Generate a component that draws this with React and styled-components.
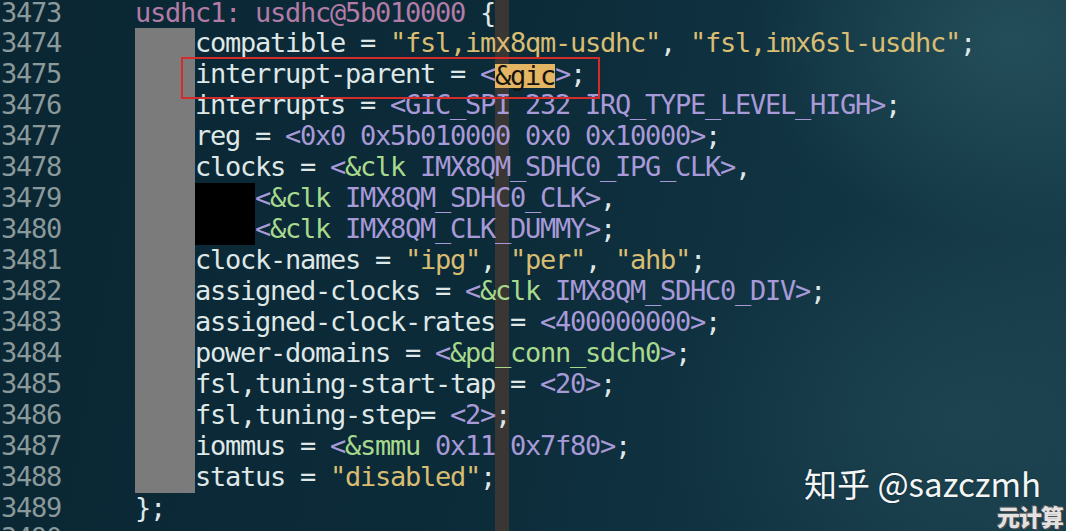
import React from 'react';
import styled, { createGlobalStyle } from 'styled-components';

const Global = createGlobalStyle`
  html, body {
    margin: 0;
    padding: 0;
    background: #0c2a37;
    overflow: hidden;
  }
`;

const colors = {
  fg: '#dfe7e7',
  num: '#8a9a9a',
  node: '#b27ca6',
  str: '#d8bd72',
  lav: '#a89ad8',
  green: '#a8d98c',
};

const Screen = styled.div`
  position: relative;
  width: 1066px;
  height: 531px;
  overflow: hidden;
  background:
    radial-gradient(ellipse 260px 200px at 1010px 40px, rgba(48, 96, 104, 0.55), transparent),
    radial-gradient(ellipse 300px 220px at 960px 420px, rgba(40, 80, 92, 0.45), transparent),
    linear-gradient(100deg, #0a2633 0%, #0c2b39 45%, #113443 75%, #173c4a 100%);
`;

const ColorColumn = styled.div`
  position: absolute;
  top: 0;
  bottom: 0;
  left: 495px;
  width: 14px;
  background: #3a3633;
  z-index: 0;
`;

const Lines = styled.div`
  position: relative;
  z-index: 1;
  display: flex;
  flex-direction: column;
  margin-top: -2.5px;
  font-family: "DejaVu Sans Mono", "Liberation Mono", monospace;
  font-size: 27px;
  letter-spacing: -1.255px;
  white-space: pre;
`;

const Row = styled.div`
  display: grid;
  grid-template-columns: 135px 1fr;
  height: 30.94px;
  line-height: 30.94px;
  align-items: stretch;
`;

const Num = styled.span`
  color: ${colors.num};
  padding-left: 1px;
`;

const Code = styled.div`
  display: flex;
  align-items: stretch;
`;

const Tab = styled.span`
  display: block;
  width: 60px;
  flex: none;
  background: ${(p) => (p.$tone === 'black' ? '#000' : '#7b7b7b')};
`;

const Text = styled.span`
  color: ${(p) => colors[p.$c || 'fg']};
`;

const Mark = styled.span`
  display: inline-block;
  height: 24px;
  line-height: 24px;
  vertical-align: middle;
  background: #e4b562;
  color: #15140f;
`;

const RedBox = styled.div`
  position: absolute;
  left: 181px;
  top: 57px;
  width: 415px;
  height: 38px;
  border: 2px solid #d42b2b;
  z-index: 2;
`;

const Watermark = styled.div`
  position: absolute;
  left: 804px;
  top: 467px;
  z-index: 3;
  font-family: "Noto Sans CJK SC", "Noto Sans", sans-serif;
  font-size: 33px;
  line-height: 33px;
  color: #f4f6f6;
  text-shadow: 0 0 2px rgba(0, 0, 0, 0.4);
  white-space: nowrap;
`;

const Badge = styled.div`
  position: absolute;
  right: 3px;
  bottom: 3px;
  z-index: 3;
  font-family: "Noto Sans CJK SC", sans-serif;
  font-weight: 900;
  font-size: 23px;
  line-height: 24px;
  letter-spacing: -1px;
  color: #e2e2e2;
  text-shadow: 0 0 1px #333, 1px 1px 0 #555, -1px -1px 0 #666;
`;

const t = (c, s) => ({ c, s });

const lines = [
  { n: 3473, tabs: [], tokens: [t('node', 'usdhc1: usdhc@5b010000'), t('fg', ' {')] },
  { n: 3474, tabs: ['gray'], tokens: [t('fg', 'compatible = '), t('str', '"fsl,imx8qm-usdhc"'), t('fg', ', '), t('str', '"fsl,imx6sl-usdhc"'), t('fg', ';')] },
  { n: 3475, tabs: ['gray'], tokens: [t('fg', 'interrupt-parent = '), t('lav', '<'), t('mark', '&gic'), t('lav', '>'), t('fg', ';')] },
  { n: 3476, tabs: ['gray'], tokens: [t('fg', 'interrupts = '), t('lav', '<GIC_SPI 232 IRQ_TYPE_LEVEL_HIGH>'), t('fg', ';')] },
  { n: 3477, tabs: ['gray'], tokens: [t('fg', 'reg = '), t('lav', '<0x0 0x5b010000 0x0 0x10000>'), t('fg', ';')] },
  { n: 3478, tabs: ['gray'], tokens: [t('fg', 'clocks = '), t('lav', '<'), t('green', '&clk'), t('lav', ' IMX8QM_SDHC0_IPG_CLK>'), t('fg', ',')] },
  { n: 3479, tabs: ['gray', 'black'], tokens: [t('lav', '<'), t('green', '&clk'), t('lav', ' IMX8QM_SDHC0_CLK>'), t('fg', ',')] },
  { n: 3480, tabs: ['gray', 'black'], tokens: [t('lav', '<'), t('green', '&clk'), t('lav', ' IMX8QM_CLK_DUMMY>'), t('fg', ';')] },
  { n: 3481, tabs: ['gray'], tokens: [t('fg', 'clock-names = '), t('str', '"ipg"'), t('fg', ', '), t('str', '"per"'), t('fg', ', '), t('str', '"ahb"'), t('fg', ';')] },
  { n: 3482, tabs: ['gray'], tokens: [t('fg', 'assigned-clocks = '), t('lav', '<'), t('green', '&clk'), t('lav', ' IMX8QM_SDHC0_DIV>'), t('fg', ';')] },
  { n: 3483, tabs: ['gray'], tokens: [t('fg', 'assigned-clock-rates = '), t('lav', '<400000000>'), t('fg', ';')] },
  { n: 3484, tabs: ['gray'], tokens: [t('fg', 'power-domains = '), t('lav', '<'), t('green', '&pd_conn_sdch0'), t('lav', '>'), t('fg', ';')] },
  { n: 3485, tabs: ['gray'], tokens: [t('fg', 'fsl,tuning-start-tap = '), t('lav', '<20>'), t('fg', ';')] },
  { n: 3486, tabs: ['gray'], tokens: [t('fg', 'fsl,tuning-step= '), t('lav', '<2>'), t('fg', ';')] },
  { n: 3487, tabs: ['gray'], tokens: [t('fg', 'iommus = '), t('lav', '<'), t('green', '&smmu'), t('lav', ' 0x11 0x7f80>'), t('fg', ';')] },
  { n: 3488, tabs: ['gray'], tokens: [t('fg', 'status = '), t('str', '"disabled"'), t('fg', ';')] },
  { n: 3489, tabs: [], tokens: [t('fg', '};')] },
  { n: 3490, tabs: [], tokens: [] },
];

export default function App() {
  return (
    <>
      <Global />
      <Screen>
        <ColorColumn />
        <Lines>
          {lines.map((line) => (
            <Row key={line.n}>
              <Num>{line.n}</Num>
              <Code>
                {line.tabs.map((tone, i) => (
                  <Tab key={i} $tone={tone} />
                ))}
                <span>
                  {line.tokens.map((tok, i) =>
                    tok.c === 'mark' ? (
                      <Mark key={i}>{tok.s}</Mark>
                    ) : (
                      <Text key={i} $c={tok.c}>{tok.s}</Text>
                    )
                  )}
                </span>
              </Code>
            </Row>
          ))}
        </Lines>
        <RedBox />
        <Watermark>知乎 @sazczmh</Watermark>
        <Badge>元计算</Badge>
      </Screen>
    </>
  );
}
